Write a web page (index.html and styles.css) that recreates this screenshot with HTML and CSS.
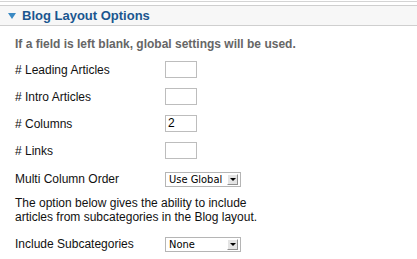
FILE: index.html
```html
<!DOCTYPE html>
<html lang="en">
  <head>
    <meta charset="UTF-8" />
    <title>Blog Layout Options</title>
    <link rel="stylesheet" href="styles.css">
  </head>
  <body>
    <div class="panel">
      <div class="panelHead">
        <span class="toggle"></span>
        <span class="title">Blog Layout Options</span>
      </div>
      <div class="panelBody">
        <p class="note">If a field is left blank, global settings will be used.</p>
        <div class="row">
          <label>#&nbsp;Leading Articles</label>
          <span class="field"></span>
        </div>
        <div class="row">
          <label>#&nbsp;Intro Articles</label>
          <span class="field"></span>
        </div>
        <div class="row">
          <label>#&nbsp;Columns</label>
          <span class="field">2</span>
        </div>
        <div class="row">
          <label>#&nbsp;Links</label>
          <span class="field"></span>
        </div>
        <div class="row selectRow">
          <label>Multi Column Order</label>
          <span class="select"><span class="value">Use Global</span><span class="arrow"></span></span>
        </div>
        <p class="desc">The option below gives the ability to include<br>articles from subcategories in the Blog layout.</p>
        <div class="row selectRow">
          <label>Include Subcategories</label>
          <span class="select"><span class="value">None</span><span class="arrow"></span></span>
        </div>
      </div>
    </div>
  </body>
</html>
```

FILE: styles.css
```css
html,
body {
  margin: 0;
  padding: 0;
  background: #ffffff;
  font-family: "Liberation Sans", Arial, sans-serif;
  font-size: 12px;
}

.panel {
  border-top: 1px solid #d4d4d4;
  margin-top: 1px;
  padding-top: 3px;
}

.panelHead {
  display: flex;
  align-items: center;
  height: 19px;
  background: #f7f7f7;
  border-top: 1px solid #cfcfcf;
  border-bottom: 1px solid #cfcfcf;
}
.toggle {
  width: 0;
  height: 0;
  margin-left: 8px;
  margin-right: 6px;
  border-left: 4px solid transparent;
  border-right: 4px solid transparent;
  border-top: 6px solid #3b8ac4;
}
.title {
  font-weight: bold;
  font-size: 13px;
  color: #1b568f;
}

.panelBody {
  padding: 0 0 0 15px;
}

.note {
  margin: 11px 0 5px;
  font-weight: bold;
  color: #666666;
  line-height: 14px;
}

.row {
  display: flex;
  align-items: center;
  height: 27px;
}
.row label {
  width: 150px;
  color: #111111;
}
.field {
  box-sizing: border-box;
  width: 32px;
  height: 17px;
  border: 1px solid #bdbdbd;
  padding: 1px 2px;
  font-size: 12px;
  line-height: 13px;
}

.selectRow {
  height: 30px;
}
.select {
  box-sizing: border-box;
  display: flex;
  align-items: center;
  width: 76px;
  height: 15px;
  border: 1px solid #b5b5b5;
  font-family: "DejaVu Sans Condensed", "DejaVu Sans", sans-serif;
  font-size: 11px;
}
.select .value {
  flex: 1;
  padding-left: 3px;
}
.arrow {
  width: 11px;
  height: 11px;
  margin-right: 2px;
  background: #e4e4e4;
  border: 1px solid #ffffff;
  border-right-color: #8f8f8f;
  border-bottom-color: #8f8f8f;
  box-sizing: border-box;
  display: flex;
  align-items: center;
  justify-content: center;
}
.arrow::after {
  content: "";
  border-left: 3px solid transparent;
  border-right: 3px solid transparent;
  border-top: 3px solid #000000;
}

.desc {
  margin: 2px 0 5px;
  line-height: 14px;
  color: #111111;
}
```
